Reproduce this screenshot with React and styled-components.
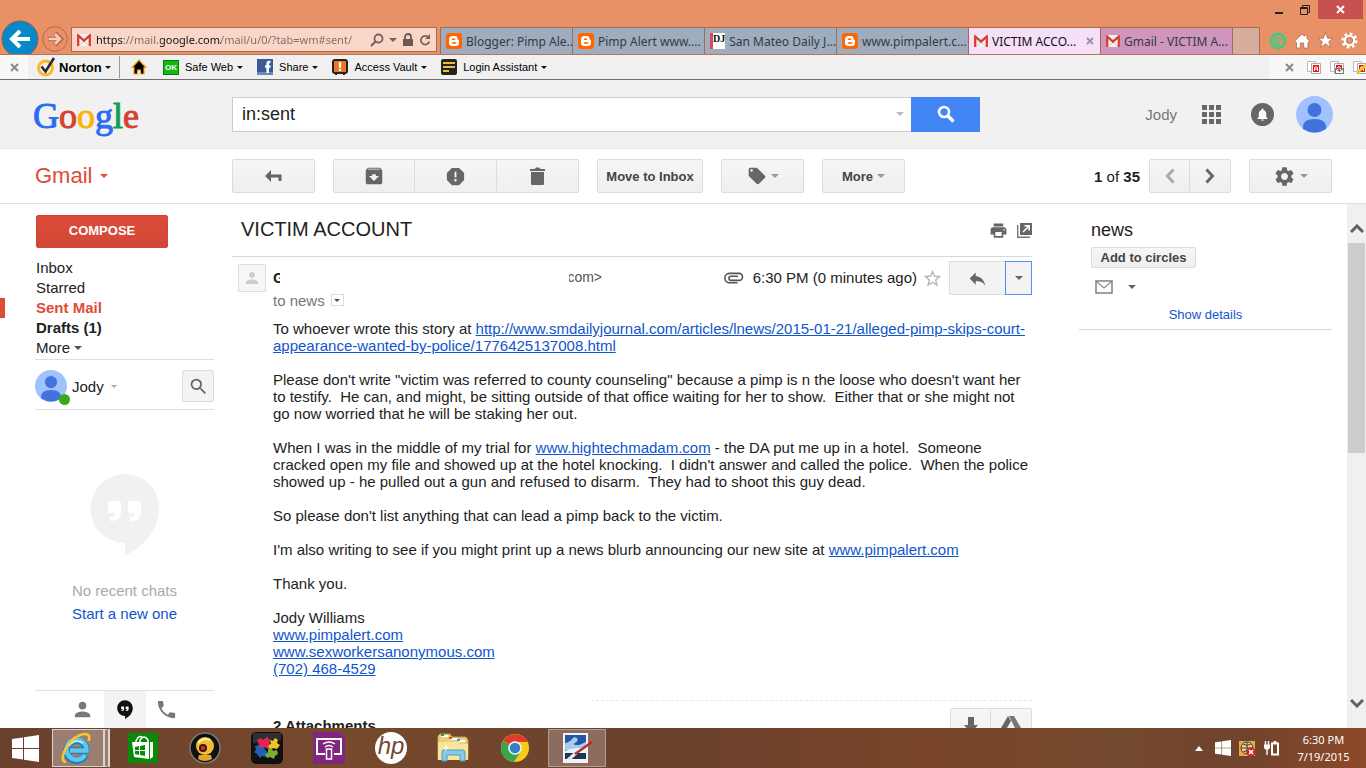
import React from "react";
import styled, { createGlobalStyle } from "styled-components";
import {
  MdArchive,
  MdLocalOffer,
  MdLocalPhone,
  MdPerson,
  MdPrint,
  MdReport,
  MdSearch,
  MdSettings,
  MdStarBorder,
  MdNotifications,
  MdReply,
} from "react-icons/md";

const browserTabs = [
  { id: 1, icon: "blogger", title: "Blogger: Pimp Ale..." },
  { id: 2, icon: "blogger", title: "Pimp Alert www...." },
  { id: 3, icon: "journal", title: "San Mateo Daily J..." },
  { id: 4, icon: "blogger", title: "www.pimpalert.c..." },
  { id: 5, icon: "gmail", title: "VICTIM ACCO...", active: true },
  { id: 6, icon: "gmail", title: "Gmail - VICTIM A...", tint: "#d095bc" },
];

const folders = [
  { name: "Inbox" },
  { name: "Starred" },
  { name: "Sent Mail", current: true },
  { name: "Drafts (1)", bold: true },
];

export default function App() {
  return (
    <>
      <GlobalStyle />
      <Page>
        <BrowserFrame />
        <NortonBar />
        <GoogleBar />
        <MailToolbar />
        <Content>
          <Sidebar />
          <Message />
          <ContactCard />
          <ScrollBar>
            <ScrollArrow aria-label="Scroll up" $up>
              <Chevron d="M1 8 L7 2 L13 8" />
            </ScrollArrow>
            <ScrollThumb />
            <ScrollArrow aria-label="Scroll down">
              <Chevron d="M1 2 L7 8 L13 2" />
            </ScrollArrow>
          </ScrollBar>
        </Content>
        <TaskBar />
      </Page>
    </>
  );
}

function BrowserFrame() {
  return (
    <Frame>
      <WindowButtons>
        <WindowButton aria-label="Minimize">
          <svg width="10" height="10">
            <path d="M1 8h8" stroke="#222" strokeWidth="2" />
          </svg>
        </WindowButton>
        <WindowButton aria-label="Restore">
          <svg width="10" height="10" fill="none" stroke="#222">
            <path d="M.5 2.5h7v7h-7zM2.5 2.5v-2h7v7h-2M.5 3.5h7" />
          </svg>
        </WindowButton>
        <WindowButton aria-label="Close" $close>
          <svg width="9" height="9" stroke="#fff" strokeWidth="2">
            <path d="M1 1l7 7M8 1l-7 7" />
          </svg>
        </WindowButton>
      </WindowButtons>
      <NavRow>
        <BackButton aria-label="Back">
          <svg width="38" height="38" viewBox="0 0 38 38">
            <circle cx="19" cy="19" r="18" fill="#0688c9" stroke="#8d5c45" />
            <path
              d="M29 19H12M19 11l-8 8 8 8"
              fill="none"
              stroke="#fff"
              strokeWidth="4"
            />
          </svg>
        </BackButton>
        <ForwardButton aria-label="Forward">
          <svg width="26" height="26" viewBox="0 0 26 26" fill="none">
            <circle cx="13" cy="13" r="12.3" stroke="#b4694a" />
            <path d="M6 13h12M13 7l6 6-6 6" stroke="#b4694a" strokeWidth="4.5" />
            <path d="M6.500 13h11M13 8l5 5-5 5" stroke="#f6cdb9" strokeWidth="2.500" />
          </svg>
        </ForwardButton>
        <AddressBar>
          <GmailMark />
          <AddressInput
            aria-label="Address"
            defaultValue="https://mail.google.com/mail/u/0/?tab=wm#sent/"
          />
          <svg width="14" height="14" fill="none" stroke="#7b5f54">
            <circle cx="8.500" cy="5.500" r="4" strokeWidth="1.800" />
            <path d="M5.500 8.500L1 13" strokeWidth="2.200" />
          </svg>
          <Caret $color="#7b5f54" />
          <svg width="12" height="14" viewBox="0 0 12 14">
            <rect x="1" y="6" width="10" height="7" fill="#6c5952" />
            <path d="M3 7V4a3 3 0 0 1 6 0v3" fill="none" stroke="#6c5952" strokeWidth="1.800" />
          </svg>
          <svg width="12" height="14" viewBox="0 0 12 14">
            <path d="M9.500 4.500A4.300 4.300 0 1 0 10.300 8.500" fill="none" stroke="#7b5f54" strokeWidth="1.800" />
            <path d="M11 1v5H6z" fill="#7b5f54" />
          </svg>
        </AddressBar>
        <TabStrip>
          {browserTabs.map((tab) => (
            <Tab key={tab.id} $active={tab.active} $tint={tab.tint}>
              {tab.icon === "blogger" && <BloggerMark />}
              {tab.icon === "journal" && <JournalMark />}
              {tab.icon === "gmail" && <GmailMark />}
              <span>{tab.title}</span>
              {tab.active && (
                <svg width="8" height="8" stroke="#a291a5" strokeWidth="2">
                  <path d="M1 1l6 6M7 1l-6 6" />
                </svg>
              )}
            </Tab>
          ))}
          <NewTab aria-label="New tab" />
        </TabStrip>
        <FrameTools>
          <PlainButton aria-label="Extension">
            <svg width="18" height="18" fill="none">
              <circle cx="9" cy="9" r="7" stroke="#4dc583" strokeWidth="3" />
              <path d="M11.500 12a3.600 3.600 0 1 1 1-3" stroke="#4dc583" strokeWidth="1.800" />
              <circle cx="9" cy="9" r="1.500" fill="#4dc583" />
            </svg>
          </PlainButton>
          <PlainButton aria-label="Home">
            <svg width="16" height="16" fill="#fff" stroke="#a8694e" strokeWidth=".8">
              <path d="M8 1l2.500 2.300V2h2.500v3.500L15.500 8 14 9.500V15H9.700v-5H6.300v5H2.500V9.500L.7 8z" />
            </svg>
          </PlainButton>
          <PlainButton aria-label="Favorites">
            <svg width="17" height="17" fill="#fff" stroke="#a8694e" strokeWidth=".8">
              <path d="M8.500.8l2.200 5.400h5.500l-4.400 3.500 1.700 5.700-5-3.500-5 3.500 1.700-5.700L.8 6.200h5.500z" />
            </svg>
          </PlainButton>
          <PlainButton aria-label="Tools">
            <svg width="17" height="17" viewBox="0 0 17 17" fill="none">
              <circle cx="8.500" cy="8.500" r="6.700" stroke="#fff" strokeWidth="2.800" strokeDasharray="2.600 2.660" />
              <circle cx="8.500" cy="8.500" r="4.500" stroke="#fff" strokeWidth="2.400" />
              <circle cx="8.500" cy="8.500" r="3" stroke="#a8694e" strokeWidth=".8" />
            </svg>
          </PlainButton>
        </FrameTools>
      </NavRow>
    </Frame>
  );
}

function NortonBar() {
  return (
    <Norton>
      <BarClose aria-label="Close toolbar">
        <CrossMark />
      </BarClose>
      <NortonBrand>
        <svg width="19" height="20" viewBox="0 0 19 20" fill="none">
          <circle cx="8.500" cy="11" r="7" stroke="#fbb929" strokeWidth="3" />
          <path d="M4.500 9.500l4 5L17 1" stroke="#2b2b2b" strokeWidth="2.600" />
        </svg>
        <b>Norton</b>
        <Caret $small $color="#111" />
      </NortonBrand>
      <NortonHome aria-label="Norton home">
        <svg width="16" height="16">
          <path d="M8 1L15 8.500h-2V15H9.500v-4h-3v4H3V8.500H1z" fill="#000" stroke="#f7a21b" strokeWidth="1.200" />
        </svg>
      </NortonHome>
      <NortonItems>
        <NortonItem>
          <OkBadge>OK</OkBadge>
          Safe Web
          <Caret $small $color="#111" />
        </NortonItem>
        <NortonItem>
          <svg width="16" height="16">
            <path d="M0 0h16v16H0z" fill="#3b5a9b" />
            <path d="M0 13h16v3H0z" fill="#6e87bb" />
            <path d="M13.500 3h-1.300q-1.500 0-1.500 1.600V14M8 7.500h5.500" fill="none" stroke="#fff" strokeWidth="2.500" />
          </svg>
          Share
          <Caret $small $color="#111" />
        </NortonItem>
        <NortonItem>
          <svg width="16" height="16">
            <path d="M3 13h2v3H3zM11 13h2v3h-2z" fill="#222" />
            <rect x="1" y="1" width="14" height="13" rx="2" fill="#e8772c" stroke="#2a211c" strokeWidth="2" />
            <path d="M8 3v6M8 10v2" stroke="#fff" strokeWidth="2.200" />
          </svg>
          Access Vault
          <Caret $small $color="#111" />
        </NortonItem>
        <NortonItem>
          <svg width="16" height="16">
            <rect width="16" height="16" rx="2" fill="#24221f" />
            <path d="M2 4h12M2 8h12M2 12h6" stroke="#e9bf3b" strokeWidth="1.800" />
          </svg>
          Login Assistant
          <Caret $small $color="#111" />
        </NortonItem>
      </NortonItems>
      <PdfTools>
        <PlainButton aria-label="Close PDF toolbar">
          <CrossMark />
        </PlainButton>
        <PlainButton aria-label="Convert page">
          <PdfMark />
        </PlainButton>
        <PlainButton aria-label="Mail page">
          <PdfMark kind="mail" />
        </PlainButton>
        <PlainButton aria-label="Edit page">
          <PdfMark kind="edit" />
        </PlainButton>
      </PdfTools>
    </Norton>
  );
}

function GoogleBar() {
  return (
    <GoogleHeader>
      <Logo href="#google">
        <Letter $color="#2a6df4">G</Letter>
        <Letter $color="#d5422f">o</Letter>
        <Letter $color="#f6b60d">o</Letter>
        <Letter $color="#2a6df4">g</Letter>
        <Letter $color="#0e9f58">l</Letter>
        <Letter $color="#d5422f">e</Letter>
      </Logo>
      <SearchForm onSubmit={(e) => e.preventDefault()}>
        <SearchInput aria-label="Search mail" defaultValue="in:sent" />
        <SearchOptions type="button" aria-label="Search options">
          <Caret $color="#bbb" />
        </SearchOptions>
        <SearchButton aria-label="Search">
          <svg width="18" height="18" fill="none" stroke="#fff">
            <circle cx="7" cy="7" r="5" strokeWidth="2.600" />
            <path d="M10.500 10.500L16.500 16.500" strokeWidth="3.400" />
          </svg>
        </SearchButton>
      </SearchForm>
      <Account>
        <AccountName href="#jody">Jody</AccountName>
        <PlainButton aria-label="Apps">
          <svg width="19" height="19" fill="#666">
            {[0, 7, 14].map((y) =>
              [0, 7, 14].map((x) => <rect key={`${x}-${y}`} x={x} y={y} width="5" height="5" />)
            )}
          </svg>
        </PlainButton>
        <BellButton aria-label="Notifications">
          <MdNotifications size={15} />
        </BellButton>
        <PlainButton aria-label="Profile">
          <Avatar size="37" />
        </PlainButton>
      </Account>
    </GoogleHeader>
  );
}

function MailToolbar() {
  return (
    <Toolbar>
      <GmailMenu>
        Gmail
        <Caret $color="#dd4b39" />
      </GmailMenu>
      <ToolButton aria-label="Back to list">
        <svg width="17" height="13">
          <path d="M0 6L6 0v12z" fill="#666" />
          <path d="M5 6h10v5" fill="none" stroke="#666" strokeWidth="3" />
        </svg>
      </ToolButton>
      <ButtonGroup>
        <ToolButton aria-label="Archive">
          <MdArchive size={22} />
        </ToolButton>
        <ToolButton aria-label="Report spam">
          <MdReport size={23} />
        </ToolButton>
        <ToolButton aria-label="Delete">
          <svg width="15" height="18" fill="#666">
            <path d="M0 2h4.500L6 .5h3L10.500 2H15v2H0zM1 5h13v12q0 1-1 1H2q-1 0-1-1z" />
          </svg>
        </ToolButton>
      </ButtonGroup>
      <ToolButton $wide>Move to Inbox</ToolButton>
      <ToolButton aria-label="Labels">
        <MdLocalOffer size={20} />
        <Caret $color="#999" />
      </ToolButton>
      <ToolButton>
        More
        <Caret $color="#999" />
      </ToolButton>
      <Pager>
        <span>
          <b>1</b> of <b>35</b>
        </span>
        <ButtonGroup $narrow>
          <ToolButton aria-label="Newer">
            <svg width="10" height="16" fill="none" stroke="#aaa" strokeWidth="3">
              <path d="M8.500 1.500L2.500 8l6 6.500" />
            </svg>
          </ToolButton>
          <ToolButton aria-label="Older">
            <svg width="10" height="16" fill="none" stroke="#666" strokeWidth="3">
              <path d="M1.500 1.500L7.500 8l-6 6.500" />
            </svg>
          </ToolButton>
        </ButtonGroup>
        <ToolButton aria-label="Settings">
          <MdSettings size={23} />
          <Caret $color="#999" />
        </ToolButton>
      </Pager>
    </Toolbar>
  );
}

function Sidebar() {
  return (
    <Side>
      <Compose>COMPOSE</Compose>
      <nav>
        {folders.map((folder) => (
          <Folder key={folder.name} $current={folder.current}>
            <FolderLink href="#folder" $current={folder.current} $bold={folder.bold}>
              {folder.name}
            </FolderLink>
          </Folder>
        ))}
        <Folder>
          <MoreButton>
            More
            <Caret $color="#555" />
          </MoreButton>
        </Folder>
      </nav>
      <ChatHeader>
        <ChatAvatar>
          <Avatar size="32" />
          <Online />
        </ChatAvatar>
        <ChatName>
          Jody
          <Caret $small $color="#aaa" />
        </ChatName>
        <ChatSearch aria-label="Search people">
          <MdSearch size={21} />
        </ChatSearch>
      </ChatHeader>
      <ChatEmpty>
        <HangoutMark size="70" fill="#f1f1f1" quote="#fff" />
        <p>No recent chats</p>
        <a href="#chat">Start a new one</a>
      </ChatEmpty>
      <ChatTabs>
        <ChatTab aria-label="Contacts">
          <MdPerson size={23} />
        </ChatTab>
        <ChatTab aria-label="Hangouts" $active>
          <HangoutMark size="16" fill="#111" quote="#fff" />
        </ChatTab>
        <ChatTab aria-label="Phone">
          <MdLocalPhone size={23} />
        </ChatTab>
      </ChatTabs>
    </Side>
  );
}

function Message() {
  return (
    <Mail>
      <SubjectRow>
        <Subject>VICTIM ACCOUNT</Subject>
        <PlainButton aria-label="Print all">
          <MdPrint size={19} />
        </PlainButton>
        <PlainButton aria-label="In new window">
          <svg width="15" height="15">
            <path d="M3 0h12v12H3z" fill="#666" />
            <path d="M.7 2v12.300H13" fill="none" stroke="#777" strokeWidth="1.400" />
            <path d="M6 9l6-6M7.500 2.800H12.200V7.500" fill="none" stroke="#fff" strokeWidth="1.600" />
          </svg>
        </PlainButton>
      </SubjectRow>
      <SenderRow>
        <SenderPhoto>
          <MdPerson size={18} />
        </SenderPhoto>
        <SenderInitial>G</SenderInitial>
        <SenderAddress>com&gt;</SenderAddress>
        <SentTime>
          <svg width="20" height="12" fill="none" stroke="#555" strokeWidth="1.600">
            <path d="M13.500 10.800H5.500a4.700 4.700 0 0 1 0-9.400H15a3.500 3.500 0 0 1 0 7H7a2 2 0 0 1 0-4.100h7" />
          </svg>
          <span>6:30 PM (0 minutes ago)</span>
          <PlainButton aria-label="Star">
            <MdStarBorder size={21} color="#b5b5b5" />
          </PlainButton>
        </SentTime>
        <ReplyButton aria-label="Reply">
          <MdReply size={21} />
        </ReplyButton>
        <ReplyMore aria-label="More reply options">
          <Caret $color="#666" />
        </ReplyMore>
      </SenderRow>
      <ToLine>
        to news
        <DetailsButton aria-label="Show details">
          <Caret $small $color="#555" />
        </DetailsButton>
      </ToLine>
      <Body>
        <p>
          To whoever wrote this story at{" "}
          <a href="#story">
            http://www.smdailyjournal.com/articles/lnews/2015-01-21/alleged-pimp-skips-court-
            <br />
            appearance-wanted-by-police/1776425137008.html
          </a>
        </p>
        <p>
          Please don't write "victim was referred to county counseling" because a pimp is n the loose who doesn't want her
          <br />
          to testify.&nbsp; He can, and might, be sitting outside of that office waiting for her to show.&nbsp; Either
          that or she might not
          <br />
          go now worried that he will be staking her out.
        </p>
        <p>
          When I was in the middle of my trial for <a href="#site">www.hightechmadam.com</a> - the DA put me up in a
          hotel.&nbsp; Someone
          <br />
          cracked open my file and showed up at the hotel knocking.&nbsp; I didn't answer and called the police.&nbsp;
          When the police
          <br />
          showed up - he pulled out a gun and refused to disarm.&nbsp; They had to shoot this guy dead.
        </p>
        <p>So please don't list anything that can lead a pimp back to the victim.</p>
        <p>
          I'm also writing to see if you might print up a news blurb announcing our new site at{" "}
          <a href="#pimpalert">www.pimpalert.com</a>
        </p>
        <p>Thank you.</p>
        <p>
          Jody Williams
          <br />
          <a href="#pimpalert">www.pimpalert.com</a>
          <br />
          <a href="#swa">www.sexworkersanonymous.com</a>
          <br />
          <a href="#phone">(702) 468-4529</a>
        </p>
      </Body>
      <DottedLine />
      <Attachments>
        <b>2 Attachments</b>
        <ButtonGroup $narrow>
          <ToolButton aria-label="Download all">
            <svg width="14" height="16" fill="#666">
              <path d="M4 0h6v8h4l-7 8-7-8h4z" />
            </svg>
          </ToolButton>
          <ToolButton aria-label="Save to Drive">
            <svg width="20" height="18" fill="#666">
              <path d="M7 0L0 12l3 5L10 5z" />
              <path d="M8 0h5l7 12h-6zM8 13h12l-3 5H5z" fill="#777" />
            </svg>
          </ToolButton>
        </ButtonGroup>
      </Attachments>
    </Mail>
  );
}

function ContactCard() {
  return (
    <Contact>
      <h2>news</h2>
      <CircleButton>Add to circles</CircleButton>
      <ContactActions>
        <PlainButton aria-label="Email">
          <svg width="18" height="14" fill="none" stroke="#888">
            <rect x="1" y="1" width="16" height="12" strokeWidth="1.600" />
            <path d="M2 2l7 6 7-6" strokeWidth="1.200" />
          </svg>
        </PlainButton>
        <PlainButton aria-label="More actions">
          <Caret $color="#666" />
        </PlainButton>
      </ContactActions>
      <DetailsLink href="#details">Show details</DetailsLink>
    </Contact>
  );
}

function TaskBar() {
  return (
    <Tasks>
      <StartButton aria-label="Start">
        <WindowsMark size="27" />
      </StartButton>
      <Task aria-label="Internet Explorer" $open>
        <svg width="32" height="32" viewBox="0 0 32 32" fill="none">
          <path d="M29 18.500H11M26.500 18A10 10 0 1 0 25.500 23" stroke="#167fb8" strokeWidth="6.500" />
          <path d="M28.500 18.500H10M26.500 18.500A10 10 0 1 0 25 23" stroke="#5cc8f2" strokeWidth="4.500" />
          <path d="M9 14q6-8 14-3" stroke="#c2effd" strokeWidth="1.600" />
          <path d="M6 30C-2 30 6 9 19 3.500 27 0 31 3 28.500 9" stroke="#f7c62b" strokeWidth="2.600" />
        </svg>
      </Task>
      <Task aria-label="Store">
        <svg width="30" height="30">
          <path d="M0 0h30v30H0z" fill="#078a07" />
          <path d="M4 9h17v17L6 24zM22 9h3v15l-3 2z" fill="#fff" />
          <path d="M8 10V8q3-7 7-3M12 9V7q4-6 8 0v3" fill="none" stroke="#fff" strokeWidth="1.500" />
          <path d="M7 14l4-1v4H7zM12 13l5-1v5h-5zM7 18h4v4l-4-1zM12 18h5v5l-5-1z" fill="#078a07" />
        </svg>
      </Task>
      <Task aria-label="Webcam">
        <svg width="32" height="32">
          <circle cx="16" cy="16" r="15" fill="#111" stroke="#777" strokeWidth="1.600" />
          <path d="M10 23h12l1 4q-7 4-14 0z" fill="#e0a929" />
          <circle cx="16" cy="14" r="9" fill="#f0bd33" />
          <path d="M9 11q5-6 12-3" stroke="#fff3a4" strokeWidth="2" fill="none" />
          <circle cx="14" cy="16" r="4" fill="#281714" />
          <circle cx="14" cy="16" r="2.300" fill="#e32016" />
        </svg>
      </Task>
      <Task aria-label="Puzzle">
        <svg width="32" height="32">
          <rect width="32" height="32" rx="5" fill="#101010" />
          <path d="M2 1h28v7Q16 13 2 11z" fill="#444" opacity=".6" />
          <path d="M6 8l4-2 2 2 4-3 3 3-1 3 3 2-4 4-4-2-4 2-3-2 2-3z" fill="#e32651" />
          <path d="M19 8l3 1 2-3 3 2-1 3 3 2-3 4-4-1-3 2-2-4 3-2z" fill="#f2c527" />
          <path d="M4 14l4-1 1 3 4-1 2 4 2 1-2 5-4-1-2 2-3-4-3-2 2-2z" fill="#1f60b4" />
          <path d="M17 17l4-1 1 3 4-1 1 4-3 2-1 3-4-2-3 1-2-4 3-1z" fill="#76af31" />
        </svg>
      </Task>
      <Task aria-label="Cast">
        <svg width="32" height="32" fill="none" stroke="#fff">
          <path d="M0 0h27l5 5v27H0z" fill="#812680" stroke="none" />
          <path d="M12 22H4V7h24v15h-7" strokeWidth="2" />
          <rect x="13.500" y="17" width="5" height="10" strokeWidth="1.500" />
          <path d="M10 12q6-4 12 0M12 15q4-3 8 0" strokeWidth="1.500" />
        </svg>
      </Task>
      <Task aria-label="HP">
        <HpMark>hp</HpMark>
      </Task>
      <Task aria-label="File Explorer">
        <svg width="32" height="32">
          <path d="M1 4l2-2h10l2 3h14l2 3v19H1z" fill="#e9cf75" stroke="#b99b43" />
          <path d="M4 3h7v2H4zM13 6h8v2h-8zM21 8h7v2h-7z" fill="#fff" />
          <path d="M4 2h3v2H4z" fill="#21a043" />
          <path d="M12 5h3v2h-3z" fill="#dd482c" />
          <path d="M20 7h3v2h-3z" fill="#239ed8" />
          <path d="M1 10h20l2 2h8v16H1z" fill="#f8e59a" />
          <path d="M5 29V20q0-2 2-2h18q3 0 3 2v9h-5v-6H10v6z" fill="#83cce9" stroke="#4c9dc3" />
          <path d="M9 13v6M6 16h6" stroke="#fff" />
        </svg>
      </Task>
      <Task aria-label="Chrome">
        <svg width="30" height="30" viewBox="0 0 30 30">
          <circle cx="15" cy="15" r="14" fill="#fac919" />
          <path d="M15 15L3 8A14 14 0 0 1 27.500 9H15z" fill="#df3b2d" />
          <path d="M15 15L2.800 8A14 14 0 0 0 14 29l7-11z" fill="#38a64c" />
          <circle cx="15" cy="15" r="6.800" fill="#f7f7f7" />
          <circle cx="15" cy="15" r="5.300" fill="#357fca" />
        </svg>
      </Task>
      <Task aria-label="Paint" $running>
        <svg width="32" height="32">
          <path d="M2 1h25v30H2z" fill="#f4f4f4" />
          <path d="M4 3h21v24H4z" fill="#2456a8" />
          <path d="M4 11q5-1 7-4t5-1q2 3-2 5t4 2l7-3v8H4z" fill="#a5cbed" />
          <path d="M4 19q9-5 21-2v4H4z" fill="#e9f4fb" />
          <path d="M4 21h21v6H4z" fill="#1c355b" />
          <path d="M7 28l8-7" stroke="#ece7dd" strokeWidth="3.500" />
          <path d="M14 22L31 10" stroke="#bf2931" strokeWidth="2.400" />
        </svg>
      </Task>
      <Tray>
        <PlainButton aria-label="Show hidden icons">
          <svg width="8" height="5">
            <path d="M0 5l4-5 4 5z" fill="#fff" />
          </svg>
        </PlainButton>
        <PlainButton aria-label="Windows update">
          <WindowsMark size="16" />
        </PlainButton>
        <PlainButton aria-label="Network">
          <svg width="17" height="17" fill="none">
            <path d="M0 1h16v15H0z" fill="#eba943" />
            <circle cx="8" cy="8" r="6" fill="#ead69e" stroke="#473c2f" />
            <path d="M2 8h12M8 2v12M4 4q4 3 8 0M4 12q4-3 8 0" stroke="#473c2f" />
            <circle cx="12" cy="12" r="4.500" fill="#d5212f" />
            <path d="M10 10l4 4M14 10l-4 4" stroke="#fff" strokeWidth="1.600" />
          </svg>
        </PlainButton>
        <PlainButton aria-label="Battery">
          <svg width="16" height="16" fill="none" stroke="#fff">
            <path d="M8 3.500h6v11H8zM9.500 2h3" strokeWidth="2" />
            <path d="M1.500 1v4M4.500 1v4M3 9v6" strokeWidth="1.400" />
            <path d="M0 4.500h6V8L4.500 9.500h-3L0 8z" fill="#fff" stroke="none" />
          </svg>
        </PlainButton>
        <Clock>
          6:30 PM
          <br />
          7/19/2015
        </Clock>
      </Tray>
    </Tasks>
  );
}

// Icons
function GmailMark() {
  return (
    <svg width="14" height="12" viewBox="0 0 14 12">
      <path d="M0 0h14v12H0z" fill="#f5f1f1" />
      <path d="M3 11l4-4 4 4" fill="none" stroke="#ccc" />
      <path d="M1.200 12V1.500L7 6.700l5.800-5.200V12" fill="none" stroke="#d73e33" strokeWidth="2.300" />
    </svg>
  );
}

function BloggerMark() {
  return (
    <svg width="16" height="16" viewBox="0 0 16 16">
      <rect width="16" height="16" rx="3" fill="#ff6500" />
      <path
        d="M6.500 3h2.300q2.700 0 2.700 2.700 0 1 .8 1 .7 0 .7.800v2Q13 13 9.500 13h-3Q3 13 3 9.500v-3Q3 3 6.500 3z"
        fill="#fff"
      />
      <path d="M6.500 6.200h2M6.500 9.900h3.200" stroke="#ff6500" strokeWidth="1.500" strokeLinecap="round" />
    </svg>
  );
}

function JournalMark() {
  return (
    <JournalTile>
      <small>DJ</small>
    </JournalTile>
  );
}

function CrossMark() {
  return (
    <svg width="9" height="9" stroke="#8a8a8a" strokeWidth="2">
      <path d="M1 1l7 7M8 1l-7 7" />
    </svg>
  );
}

function PdfMark({ kind }) {
  return (
    <svg width="14" height="14" fill="none">
      <path d="M.5 1.500h8v10h-8z" fill="#fff" stroke="#bbb" />
      <path d="M4.500 3.500h9v10h-9z" fill="#fff" stroke="#aaa" />
      <path d="M6 5h6v7H6z" fill="#e11" />
      <path d="M7.500 11V7.500q1.500-1.500 3 0V11M7.500 9h3" stroke="#fff" />
      {kind === "mail" && <path d="M5.500 8.500h8v5h-8zl4 3 4-3" fill="#fff" stroke="#777" />}
      {kind === "edit" && <path d="M4 13l9-8" stroke="#e2cf18" strokeWidth="2.500" />}
    </svg>
  );
}

function Avatar({ size }) {
  return (
    <svg width={size} height={size} viewBox="0 0 37 37">
      <circle cx="18.500" cy="18.500" r="18.500" fill="#a0c3ff" />
      <circle cx="18.500" cy="14" r="7" fill="#4272db" />
      <path d="M7 31q0-8 11.500-8T30 31v2q-11 7-23 0z" fill="#4272db" />
    </svg>
  );
}

function HangoutMark({ size, fill, quote }) {
  return (
    <svg width={size} height={size * 1.2} viewBox="0 0 70 84">
      <path d="M35 1a34 34 0 0 1 34 34c0 24-16 38-34 48V70A34.500 34.500 0 1 1 35 1z" fill={fill} />
      <path
        d="M20 28h9q2 0 2 2v9q0 8-8 9h-3v-4q5 0 5-4h-5q-2 0-2-2v-8q0-2 2-2zM40 28h9q2 0 2 2v9q0 8-8 9h-3v-4q5 0 5-4h-5q-2 0-2-2v-8q0-2 2-2z"
        fill={quote}
      />
    </svg>
  );
}

function WindowsMark({ size }) {
  return (
    <svg width={size} height={size} viewBox="0 0 27 27" fill="#fff">
      <path d="M0 4l11-1.600V13H0zM12 2.200L27 0v13H12zM0 14h11v10.600L0 23zM12 14h15v13l-15-2.200z" />
    </svg>
  );
}

function Chevron({ d }) {
  return (
    <svg width="14" height="10" fill="none" stroke="#606060" strokeWidth="3">
      <path d={d} />
    </svg>
  );
}

// Styled Components
const GlobalStyle = createGlobalStyle`
  * {
    box-sizing: border-box;
  }
  body {
    margin: 0;
    background: #fff;
    color: #222;
    font-family: "Liberation Sans", Arial, sans-serif;
    font-size: 15px;
  }
  button, input {
    font-family: inherit;
    margin: 0;
  }
  svg {
    display: block;
    flex-shrink: 0;
  }
  a {
    color: #15c;
    text-decoration: none;
  }
`;

const Page = styled.div`
  display: flex;
  flex-direction: column;
  height: 100vh;
  overflow: hidden;
`;

const Caret = styled.i`
  flex-shrink: 0;
  border: solid transparent;
  border-width: ${(p) => (p.$small ? "3px 3px 0" : "4px 4px 0")};
  border-top-color: ${(p) => p.$color};
`;

const PlainButton = styled.button`
  display: flex;
  align-items: center;
  justify-content: center;
  padding: 0;
  border: 0;
  background: none;
  color: #666;
`;

// Browser frame
const Frame = styled.header`
  background: #e89167;
  border-bottom: 1px solid #b87657;
  font-family: "Noto Sans", "Open Sans", sans-serif;
`;

const WindowButtons = styled.div`
  display: flex;
  justify-content: flex-end;
  height: 20px;
  padding-right: 3px;
`;

const WindowButton = styled(PlainButton)`
  width: ${(p) => (p.$close ? "45px" : "26px")};
  height: 19px;
  background: ${(p) => (p.$close ? "#c75050" : "none")};
`;

const NavRow = styled.div`
  display: flex;
  align-items: flex-end;
  height: 34px;
  overflow: hidden;
`;

const BackButton = styled(PlainButton)`
  align-self: flex-start;
  margin-left: 1px;
`;

const ForwardButton = styled(PlainButton)`
  align-self: center;
  margin: 3px 3px 0;
`;

const AddressBar = styled.div`
  display: flex;
  flex: 1;
  align-items: center;
  gap: 5px;
  height: 25px;
  margin: 0 3px 2px 0;
  padding: 0 5px;
  border: 1px solid #a8694e;
  background: #f9d6c8;
`;

const AddressInput = styled.input`
  flex: 1;
  min-width: 0;
  padding: 0;
  border: 0;
  color: #222;
  font-size: 11px;
  background: linear-gradient(
    90deg,
    #111 28px,
    #7f6a60 28px,
    #7f6a60 64px,
    #111 64px,
    #111 125px,
    #7f6a60 125px
  );
  background-clip: text;
  -webkit-background-clip: text;
  -webkit-text-fill-color: transparent;
`;

const TabStrip = styled.div`
  display: flex;
  height: 27px;
`;

const Tab = styled.button`
  display: flex;
  align-items: center;
  gap: 4px;
  width: 132px;
  padding: 0 0 0 5px;
  border: 1px solid #a8694e;
  border-width: 1px 0 0 1px;
  background: ${(p) => (p.$active ? "#f6dff9" : p.$tint || "#9facbd")};
  color: ${(p) => (p.$active ? "#111" : "#333b44")};
  font-size: 12px;
  white-space: nowrap;
  span {
    flex: 1;
    text-align: left;
  }
  svg:last-child {
    margin-right: 6px;
  }
`;

const NewTab = styled.button`
  width: 28px;
  border: 1px solid #a8694e;
  border-bottom: 0;
  background: #d5ae9f;
`;

const FrameTools = styled.div`
  display: flex;
  align-items: center;
  justify-content: space-between;
  width: 106px;
  height: 27px;
  padding: 0 8px 0 9px;
`;

const JournalTile = styled.i`
  display: flex;
  justify-content: flex-end;
  width: 16px;
  height: 16px;
  border-left: 3px solid #d84a63;
  background: #fff;
  small {
    color: #111;
    font: bold 10px/12px "Liberation Serif", serif;
  }
`;

// Norton toolbar
const Norton = styled.div`
  display: flex;
  align-items: center;
  height: 25px;
  border-bottom: 1px solid #6f6f6f;
  background: #f0f0f0;
`;

const BarClose = styled(PlainButton)`
  width: 28px;
  height: 24px;
  background: #f8f8f8;
`;

const NortonBrand = styled.button`
  display: flex;
  align-items: center;
  gap: 3px;
  width: 92px;
  height: 22px;
  padding: 0 0 0 9px;
  border: 0;
  border-right: 1px solid #999;
  background: none;
  font-size: 13px;
`;

const NortonHome = styled(PlainButton)`
  width: 37px;
`;

const NortonItems = styled.div`
  display: flex;
  flex: 1;
  gap: 14px;
  padding-left: 6px;
`;

const NortonItem = styled.button`
  display: flex;
  align-items: center;
  gap: 4px;
  padding: 0;
  border: 0;
  background: none;
  color: #000;
  font-size: 11px;
  > :first-child {
    margin-right: 2px;
  }
`;

const OkBadge = styled.b`
  width: 16px;
  border: 1px solid #087d08;
  background: #12b712;
  color: #fff;
  font-size: 8px;
  line-height: 13px;
`;

const PdfTools = styled.div`
  display: flex;
  align-items: center;
  gap: 9px;
  width: 97px;
  height: 24px;
  padding-left: 16px;
  background: #f8f8f8;
  > :first-child {
    margin-right: 4px;
  }
`;

// Google bar
const GoogleHeader = styled.header`
  display: flex;
  align-items: center;
  height: 69px;
  padding-right: 33px;
  border-bottom: 1px solid #e3e3e3;
  background: #f1f1f1;
`;

const Logo = styled.a`
  width: 232px;
  padding: 4px 0 0 33px;
  font: 36px/48px "Liberation Serif", serif;
  -webkit-text-stroke: 1px;
`;

const Letter = styled.span`
  color: ${(p) => p.$color};
`;

const SearchForm = styled.form`
  display: flex;
  flex: 0 1 748px;
  height: 35px;
`;

const SearchInput = styled.input`
  flex: 1;
  min-width: 0;
  padding: 0 9px;
  border: 1px solid #ccc;
  border-right: 0;
  background: #fff;
  color: #222;
  font-size: 18px;
`;

const SearchOptions = styled(PlainButton)`
  width: 23px;
  border: 1px solid #ccc;
  border-width: 1px 0;
  background: #fff;
`;

const SearchButton = styled(PlainButton)`
  width: 69px;
  background: #4285f4;
`;

const Account = styled.div`
  display: flex;
  align-items: center;
  gap: 25px;
  margin-left: auto;
  > :nth-child(3) {
    margin: 0 -3px 0 5px;
  }
`;

const AccountName = styled.a`
  color: #777;
`;

const BellButton = styled(PlainButton)`
  width: 23px;
  height: 23px;
  border-radius: 50%;
  background: #666;
  color: #fff;
`;

// Mail toolbar
const Toolbar = styled.div`
  display: flex;
  align-items: center;
  gap: 18px;
  height: 55px;
  padding-right: 34px;
  border-bottom: 1px solid #e0e0e0;
`;

const GmailMenu = styled.button`
  display: flex;
  align-items: center;
  gap: 8px;
  width: 214px;
  padding: 0 0 0 35px;
  border: 0;
  background: none;
  color: #dd4b39;
  font-size: 22px;
`;

const ToolButton = styled.button`
  display: flex;
  align-items: center;
  justify-content: center;
  gap: 4px;
  width: ${(p) => (p.$wide ? "106px" : "83px")};
  height: 34px;
  padding: 0;
  border: 1px solid #dcdcdc;
  border-radius: 2px;
  background: linear-gradient(#f6f6f6, #efefef);
  color: #444;
  font-size: 13px;
  font-weight: bold;
  white-space: nowrap;
  svg {
    color: #666;
  }
`;

const ButtonGroup = styled.div`
  display: flex;
  ${ToolButton} {
    width: ${(p) => (p.$narrow ? "41px" : "82px")};
  }
  ${ToolButton}:first-child {
    border-radius: 2px 0 0 2px;
  }
  ${ToolButton} + ${ToolButton} {
    border-left: 0;
    border-radius: 0 2px 2px 0;
  }
`;

const Pager = styled.div`
  display: flex;
  align-items: center;
  gap: 18px;
  margin-left: auto;
  > span {
    margin-right: -9px;
  }
`;

// Content
const Content = styled.main`
  display: flex;
  flex: 1;
  min-height: 0;
  overflow: hidden;
`;

const Side = styled.aside`
  display: flex;
  flex-direction: column;
  flex-shrink: 0;
  width: 214px;
  padding-top: 11px;
`;

const Compose = styled.button`
  flex-shrink: 0;
  width: 132px;
  height: 33px;
  margin: 0 0 10px 36px;
  padding: 0 0 2px;
  border: 1px solid #cf4735;
  border-radius: 2px;
  background: linear-gradient(#dd4b39, #d14836);
  color: #fff;
  font-size: 13px;
  font-weight: bold;
`;

const Folder = styled.div`
  height: 20px;
  padding-left: 31px;
  border-left: 5px solid ${(p) => (p.$current ? "#dd4b39" : "transparent")};
  line-height: 20px;
`;

const FolderLink = styled.a`
  color: ${(p) => (p.$current ? "#dd4b39" : "#222")};
  font-weight: ${(p) => (p.$current || p.$bold ? "bold" : "normal")};
`;

const MoreButton = styled(PlainButton)`
  gap: 4px;
  color: #222;
  font-size: 15px;
  line-height: 20px;
`;

const ChatHeader = styled.div`
  display: flex;
  flex-shrink: 0;
  align-items: center;
  height: 51px;
  margin: 1px 0 0 35px;
  padding-top: 3px;
  border: 1px solid #e0e0e0;
  border-width: 1px 0;
`;

const ChatAvatar = styled.div`
  position: relative;
`;

const Online = styled.i`
  position: absolute;
  right: -3px;
  bottom: -3px;
  width: 11px;
  height: 11px;
  border-radius: 50%;
  background: #3aab17;
`;

const ChatName = styled(PlainButton)`
  gap: 7px;
  margin-left: 5px;
  color: #222;
  font-size: 15px;
`;

const ChatSearch = styled(PlainButton)`
  width: 32px;
  height: 32px;
  margin-left: auto;
  border: 1px solid #dcdcdc;
  border-radius: 2px;
  background: #f3f3f3;
`;

const ChatEmpty = styled.div`
  display: flex;
  flex: 1;
  flex-direction: column;
  align-items: center;
  justify-content: center;
  padding-bottom: 4px;
  color: #aaa;
  line-height: 20px;
  margin-left: 35px;
  p {
    margin: 24px 0 3px;
  }
`;

const ChatTabs = styled.div`
  display: flex;
  justify-content: center;
  margin-left: 35px;
  border-top: 1px solid #e0e0e0;
`;

const ChatTab = styled(PlainButton)`
  width: 42px;
  height: 37px;
  background: ${(p) => (p.$active ? "#f3f3f3" : "none")};
  color: #777;
`;

// Message
const Mail = styled.article`
  flex: 1;
  min-width: 0;
  margin-left: 18px;
`;

const SubjectRow = styled.div`
  display: flex;
  align-items: center;
  gap: 9px;
  height: 53px;
  padding-left: 9px;
  border-bottom: 1px solid #d8d8d8;
`;

const Subject = styled.h1`
  flex: 1;
  margin: 0;
  padding-bottom: 2px;
  font-size: 20px;
  font-weight: normal;
`;

const SenderRow = styled.div`
  display: flex;
  align-items: center;
  height: 34px;
  margin-top: 4px;
  line-height: 17px;
  > span,
  > b {
    padding-bottom: 2px;
  }
`;

const SenderPhoto = styled.div`
  display: flex;
  align-items: center;
  justify-content: center;
  width: 28px;
  height: 28px;
  margin: 0 7px 0 6px;
  border: 1px solid #e0e0e0;
  background: #f6f6f6;
  color: #ccc;
`;

const SenderInitial = styled.b`
  width: 7px;
  overflow: hidden;
`;

const SenderAddress = styled.span`
  display: flex;
  justify-content: flex-end;
  width: 33px;
  margin-left: 289px;
  overflow: hidden;
  color: #555;
  font-size: 14px;
`;

const SentTime = styled.div`
  display: flex;
  align-items: center;
  gap: 9px;
  margin: 0 6px 0 auto;
  span {
    padding-bottom: 2px;
  }
  button {
    margin-left: -4px;
  }
`;

const ReplyButton = styled(PlainButton)`
  width: 56px;
  height: 34px;
  border: 1px solid #dcdcdc;
  border-right: 0;
  border-radius: 2px 0 0 2px;
  background: #f3f3f3;
`;

const ReplyMore = styled(PlainButton)`
  width: 27px;
  height: 34px;
  border: 1px solid #4d90fe;
  background: #f3f3f3;
`;

const ToLine = styled.div`
  display: flex;
  align-items: center;
  gap: 6px;
  height: 10px;
  padding-left: 41px;
  color: #777;
`;

const DetailsButton = styled(PlainButton)`
  width: 13px;
  height: 12px;
  border: 1px solid #ddd;
`;

const Body = styled.div`
  padding: 15px 0 0 41px;
  line-height: 17px;
  white-space: nowrap;
  p {
    margin: 0 0 17px;
  }
  a {
    text-decoration: underline;
  }
`;

const DottedLine = styled.div`
  margin: 23px 0 7px 359px;
  border-top: 1px dashed #e8e8e8;
`;

const Attachments = styled.div`
  display: flex;
  align-items: center;
  justify-content: space-between;
  padding-left: 41px;
`;

// Contact card
const Contact = styled.aside`
  flex-shrink: 0;
  align-self: flex-start;
  width: 253px;
  margin: 0 15px 0 47px;
  padding: 16px 12px 6px;
  border-bottom: 1px solid #d8d8d8;
  h2 {
    margin: 0 0 6px;
    font-size: 18px;
    font-weight: normal;
    line-height: 21px;
  }
`;

const CircleButton = styled(ToolButton)`
  width: 105px;
  height: 21px;
`;

const ContactActions = styled.div`
  display: flex;
  align-items: center;
  gap: 15px;
  height: 38px;
  padding-left: 4px;
`;

const DetailsLink = styled.a`
  display: block;
  font-size: 13px;
  line-height: 17px;
  text-align: center;
`;

const ScrollBar = styled.div`
  display: flex;
  flex-direction: column;
  flex-shrink: 0;
  width: 19px;
  background: #f0f0f0;
`;

const ScrollArrow = styled(PlainButton)`
  height: ${(p) => (p.$up ? "39px" : "50px")};
  margin-top: ${(p) => (p.$up ? "0" : "auto")};
  padding-top: ${(p) => (p.$up ? "10px" : "0")};
`;

const ScrollThumb = styled.div`
  height: 40%;
  margin: 0 1px;
  background: #cdcdcd;
`;

// Taskbar
const Tasks = styled.footer`
  display: flex;
  align-items: center;
  flex-shrink: 0;
  height: 40px;
  background: linear-gradient(
    90deg,
    #6a402d,
    #774a2d 25%,
    #69402c 48%,
    #7a4529 68%,
    #744a2e 82%,
    #70432d 91%,
    #8d4929
  );
  color: #fff;
  font-family: "Noto Sans", "Open Sans", sans-serif;
`;

const StartButton = styled(PlainButton)`
  width: 50px;
`;

const Task = styled(PlainButton)`
  width: 58px;
  height: 38px;
  margin: 0 2px;
  ${(p) =>
    p.$open &&
    `
    padding-right: 4px;
    border: 1px solid #e0d2cc;
    border-right: 7px double #e0d2cc;
    background: #9b7e72;
  `}
  ${(p) =>
    p.$running &&
    `
    border: 1px solid #b39c91;
    background: #8b6c5e;
  `}
`;

const HpMark = styled.span`
  width: 32px;
  height: 32px;
  border-radius: 50%;
  background: #fff;
  color: #74492f;
  font: italic 24px/28px "Liberation Sans", sans-serif;
`;

const Tray = styled.div`
  display: flex;
  align-items: center;
  gap: 8px;
  margin-left: auto;
  padding-right: 15px;
  > :first-child {
    margin-right: 4px;
  }
`;

const Clock = styled.time`
  width: 55px;
  margin-left: 8px;
  font-size: 11px;
  line-height: 17px;
  text-align: center;
`;
